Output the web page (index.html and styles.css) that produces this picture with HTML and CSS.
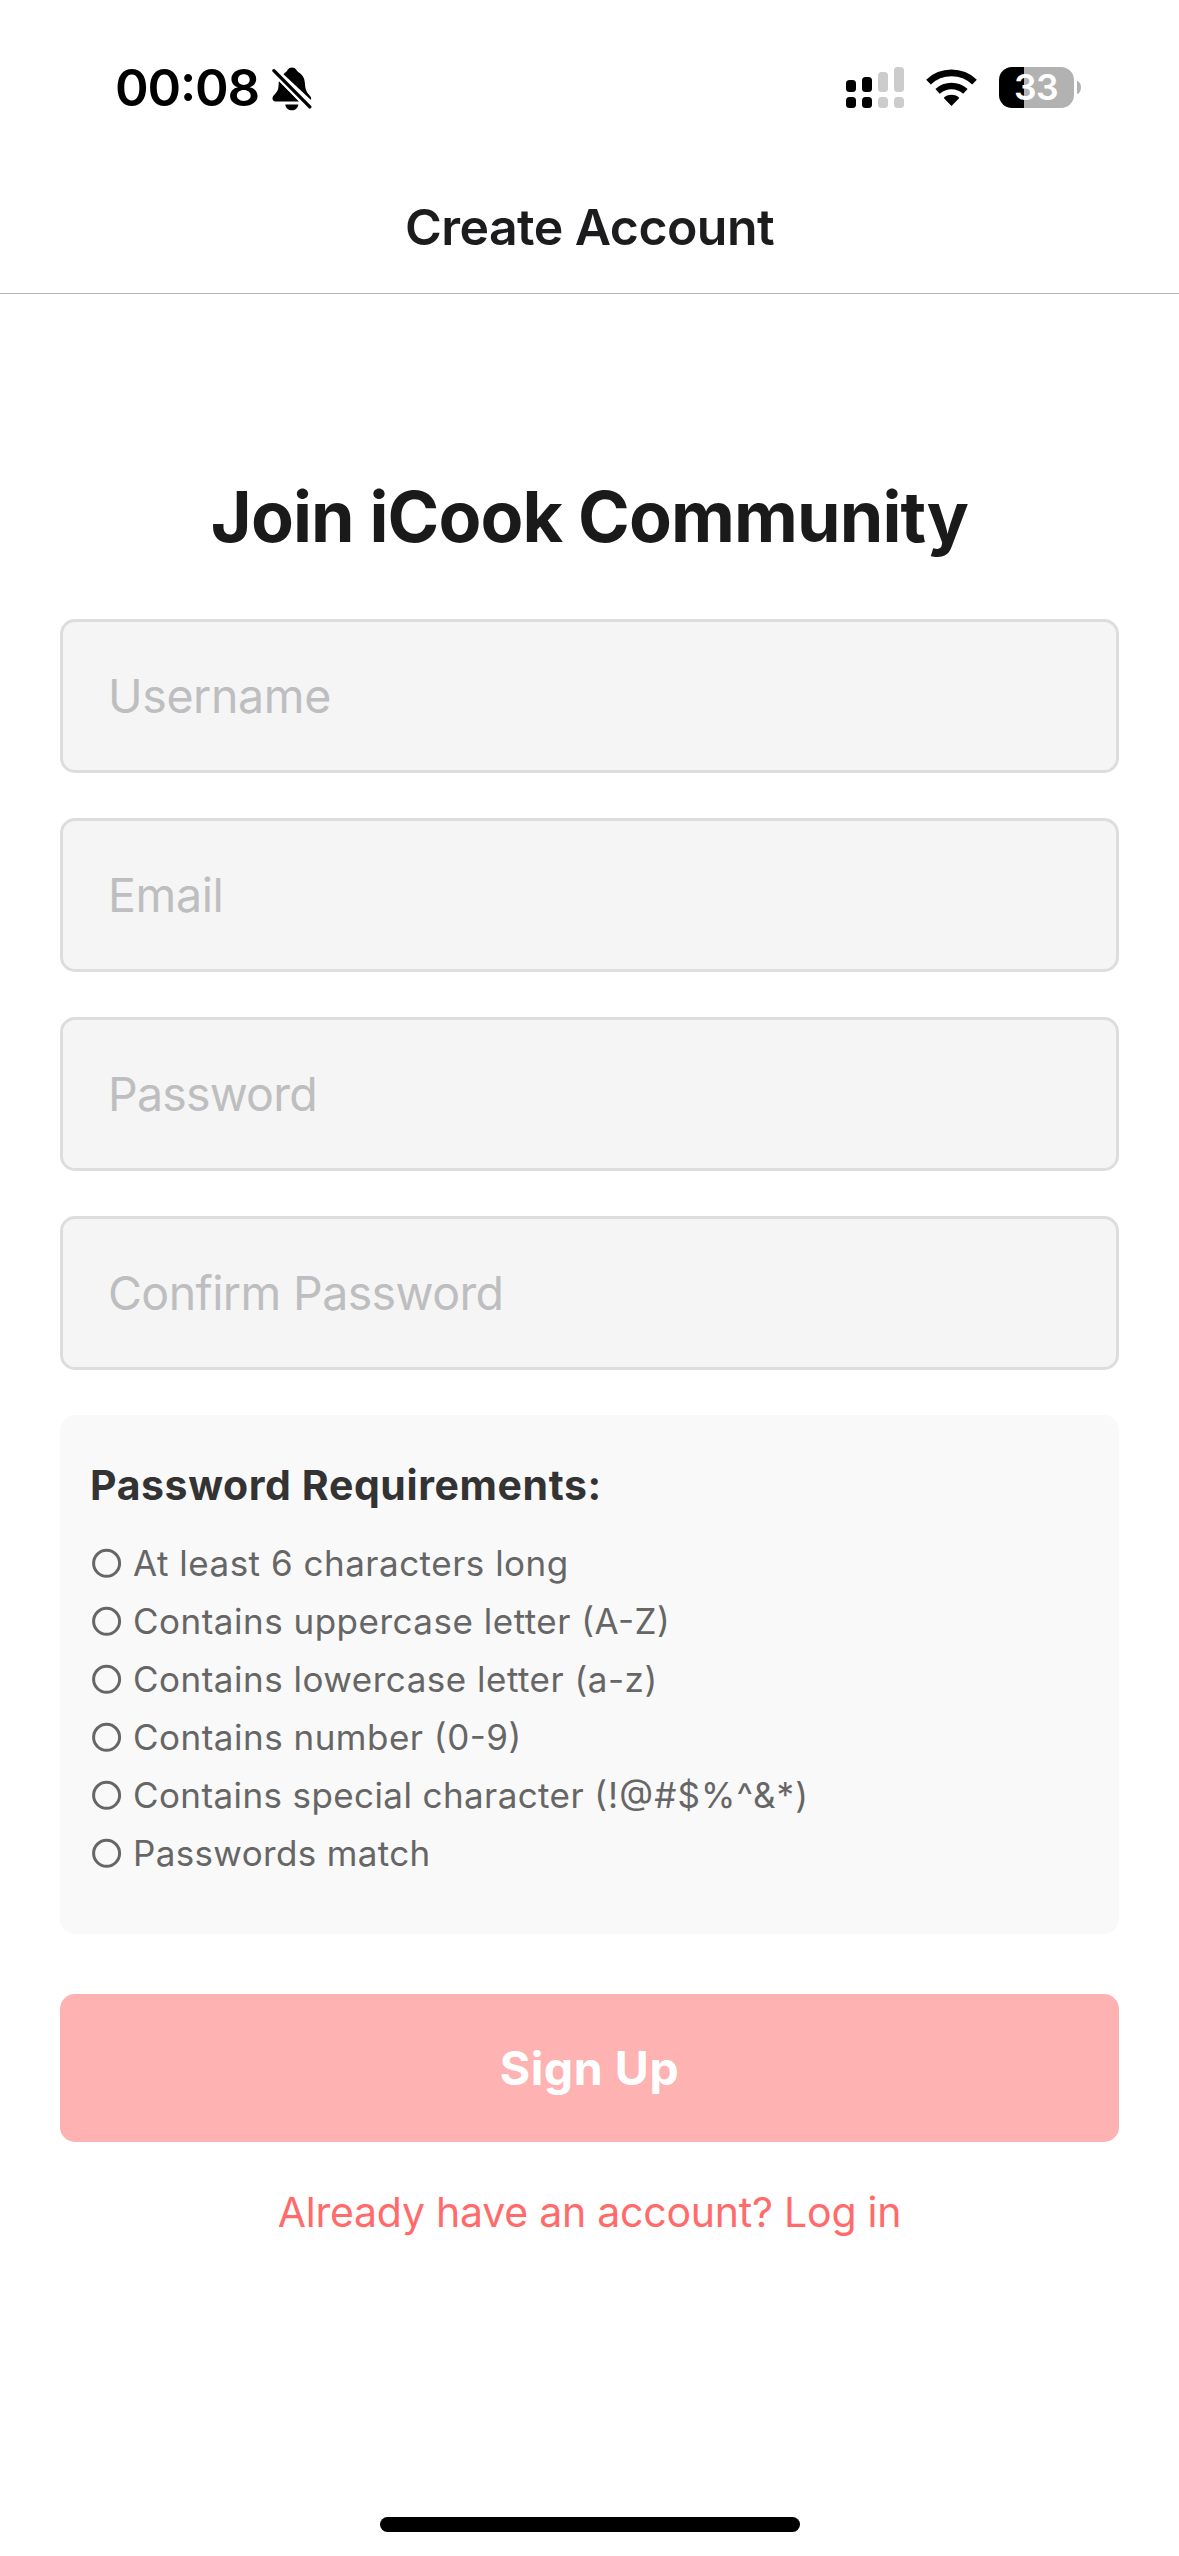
FILE: index.html
```html
<!DOCTYPE html>
<html lang="en">
<head>
<meta charset="utf-8">
<title>Create Account</title>
<link rel="stylesheet" href="styles.css">
</head>
<body>
<div class="screen">
  <div class="status">
    <div class="status-left">
      <span class="time">00:08</span>
      <svg class="bell" width="40" height="44" viewBox="0 0 40 44">
        <path d="M11.5 7.2 C13.2 5.6 14.4 4.9 15.2 3.6 C16.2 1.5 18 .4 20 .4 C22 .4 23.8 1.5 24.8 3.6 C25.6 5.2 28 5.8 30.2 8.6 C33.4 12.4 32.6 17 33.6 21.6 C34.4 25.4 36.4 27 38.4 29.4 C39.2 30.6 39.3 31.6 39 33 Z"/>
        <path d="M7 14 L27 34.4 H3.6 C.6 34.4 -.4 31.4 1.4 28.8 C3.4 26.6 5.4 25 6.2 21.6 C6.8 18.8 6.4 16.4 7 14 Z"/>
        <path d="M13.2 37.4 H26.4 C25.8 41 23.2 43.2 19.8 43.2 C16.4 43.2 13.8 41 13.2 37.4 Z"/>
        <path d="M1.9 3.7 L37.8 39.9" fill="none" stroke="#fff" stroke-width="7.4"/>
        <path d="M1.9 3.7 L37.8 39.9" fill="none" stroke="#000" stroke-width="3.3" stroke-linecap="round"/>
      </svg>
    </div>
    <div class="status-right">
      <svg width="58" height="42" viewBox="0 0 58 42">
        <g><rect x="0" y="13" width="10" height="12" rx="3.5"/><rect x="0" y="30" width="10" height="11" rx="3.5"/>
        <rect x="16" y="10" width="10" height="15" rx="3.5"/><rect x="16" y="30" width="10" height="11" rx="3.5"/></g>
        <g fill="#ccc"><rect x="32" y="5" width="10" height="20" rx="3.5"/><rect x="32" y="30" width="10" height="11" rx="3.5"/>
        <rect x="48" y="0" width="10" height="25" rx="3.5"/><rect x="48" y="30" width="10" height="11" rx="3.5"/></g>
      </svg>
      <svg class="wifi" width="51" height="42" viewBox="0 0 51 42">
        <path d="M25.5 39 L18.4 31.8 C17.8 31.2 17.9 30.5 18.5 30 C22.6 26.9 28.4 26.9 32.5 30 C33.1 30.5 33.2 31.2 32.6 31.8 Z"/>
        <path d="M11.6 24.4 C19.6 17.2 31.4 17.2 39.4 24.4" fill="none" stroke="#000" stroke-width="6.6"/>
        <path d="M2.5 15.1 C15.4 2.9 35.6 2.9 48.5 15.1" fill="none" stroke="#000" stroke-width="6.8"/>
      </svg>
      <div class="battery"><div class="cell">33</div><div class="tip"></div></div>
    </div>
  </div>

  <header class="nav">Create Account</header>

  <main class="content">
    <h1 class="title">Join iCook Community</h1>
    <form class="form">
      <input class="field" type="text" placeholder="Username">
      <input class="field" type="text" placeholder="Email">
      <input class="field password" type="text" placeholder="Password">
      <input class="field confirm" type="text" placeholder="Confirm Password">
      <section class="rules">
        <h2 class="rules-title">Password Requirements:</h2>
        <ul class="rules-list">
          <li class="rule"><svg width="32" height="32" viewBox="0 0 32 32"><circle cx="16.6" cy="16.3" r="13"/></svg><span>At least 6 characters long</span></li>
          <li class="rule"><svg width="32" height="32" viewBox="0 0 32 32"><circle cx="16.6" cy="16.3" r="13"/></svg><span>Contains uppercase letter (A-Z)</span></li>
          <li class="rule"><svg width="32" height="32" viewBox="0 0 32 32"><circle cx="16.6" cy="16.3" r="13"/></svg><span>Contains lowercase letter (a-z)</span></li>
          <li class="rule"><svg width="32" height="32" viewBox="0 0 32 32"><circle cx="16.6" cy="16.3" r="13"/></svg><span>Contains number (0-9)</span></li>
          <li class="rule special"><svg width="32" height="32" viewBox="0 0 32 32"><circle cx="16.6" cy="16.3" r="13"/></svg><span>Contains special character <span class="symbols">(!@#$%^&amp;*)</span></span></li>
          <li class="rule match"><svg width="32" height="32" viewBox="0 0 32 32"><circle cx="16.6" cy="16.3" r="13"/></svg><span>Passwords match</span></li>
        </ul>
      </section>
      <button class="submit" type="button">Sign Up</button>
    </form>
    <a class="login">Already have an account? Log in</a>
  </main>

  <div class="home"></div>
</div>
</body>
</html>
```
FILE: styles.css
```css
* { box-sizing: border-box; margin: 0; padding: 0; }

body {
  background: #fff;
  font-family: Inter, "Liberation Sans", sans-serif;
}

.screen {
  display: flex;
  flex-direction: column;
  width: 1179px;
  height: 2556px;
  padding-bottom: 24px;
}

/* status bar */
.status {
  display: flex;
  justify-content: space-between;
  height: 176px;
  padding: 67px 98px 0 115px;
}
.status-left, .status-right { display: flex; height: 42px; }
.time {
  font-size: 51px;
  font-weight: 600;
  line-height: 42px;
  letter-spacing: -1.2px;
  font-feature-settings: "calt";
  width: 157px;
}
.status-right { gap: 22px; }
.battery { display: flex; align-items: center; gap: 3px; height: 41px; }
.cell {
  width: 75px;
  height: 41px;
  border-radius: 13px;
  background: linear-gradient(to right, #000 25px, #b2b2b2 25px);
  color: #fff;
  font-size: 35.5px;
  font-weight: 600;
  line-height: 41px;
  letter-spacing: -0.5px;
  padding-left: 15px;
}
.tip {
  width: 4px;
  height: 13px;
  border-radius: 0 4px 4px 0 / 0 6.5px 6.5px 0;
  background: #b2b2b2;
}

/* navigation header */
.nav {
  height: 118px;
  padding-bottom: 15px;
  border-bottom: 1px solid #b2b2b2;
  color: #1c1c1e;
  font-size: 50px;
  font-weight: 600;
  line-height: 102px;
  letter-spacing: -0.55px;
  text-align: center;
}

.content {
  display: flex;
  flex: 1;
  flex-direction: column;
  padding: 180px 60px 0;
}
.title {
  color: #1a1a1a;
  font-size: 70px;
  font-weight: 700;
  line-height: 85px;
  letter-spacing: -0.87px;
  text-align: center;
  margin-bottom: 60px;
}

.form { display: flex; flex-direction: column; gap: 45px; }
.field {
  width: 100%;
  height: 154px;
  padding: 0 45px;
  border: 3px solid #ddd;
  border-radius: 15px;
  background: #f5f5f5;
  font: 400 46.5px Inter, "Liberation Sans", sans-serif;
  letter-spacing: -0.38px;
}
.field::placeholder { color: #bebec0; opacity: 1; }
.password { letter-spacing: -0.8px; }
.confirm { letter-spacing: -0.6px; }

.rules {
  height: 519px;
  padding: 45px 30px 0;
  border-radius: 15px;
  background: #f9f9f9;
}
.rules-title {
  color: #333;
  font-size: 41px;
  font-weight: 700;
  line-height: 50px;
  letter-spacing: 0.6px;
  margin-bottom: 24px;
}
.rules-list { list-style: none; }
.rule {
  display: flex;
  align-items: center;
  gap: 11px;
  height: 58px;
  color: #666;
  font-size: 35px;
  line-height: 58px;
  letter-spacing: 0.5px;
  font-feature-settings: "calt";
}
.special { letter-spacing: 0.4px; }
.symbols { letter-spacing: 1.1px; }
.match { letter-spacing: 0.35px; }
.rule circle { fill: none; stroke: #666; stroke-width: 3; }

.submit {
  height: 148px;
  margin-top: 15px;
  border: 0;
  border-radius: 15px;
  background: #ffb2b2;
  color: #fff;
  font: 700 46.5px Inter, "Liberation Sans", sans-serif;
  letter-spacing: 0.56px;
}
.login {
  margin-top: 40px;
  color: #ff6b6b;
  font-size: 41px;
  line-height: 60px;
  letter-spacing: -0.23px;
  text-align: center;
}

.home {
  align-self: center;
  width: 420px;
  height: 15px;
  border-radius: 8px;
  background: #000;
}
```
